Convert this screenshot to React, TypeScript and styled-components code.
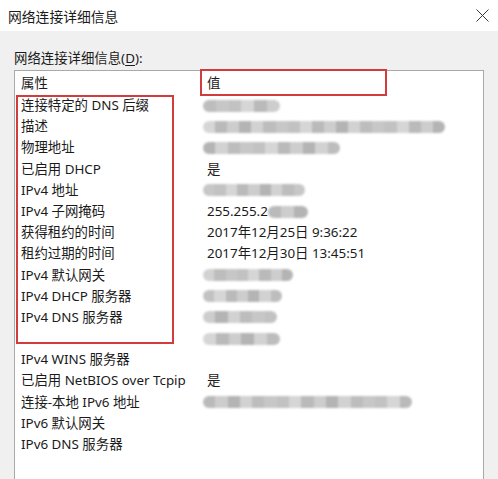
import React from "react";
import styled, { createGlobalStyle } from "styled-components";

const Global = createGlobalStyle`
  html, body { margin: 0; padding: 0; background: #f0f0f0; }
  body { font-family: "Noto Sans", "Noto Sans CJK SC", sans-serif; }
`;

const Window = styled.div`
  width: 498px;
  height: 479px;
  overflow: hidden;
  display: flex;
  flex-direction: column;
  background: #f0f0f0;
  color: #1b1b1b;
  font-family: "Noto Sans", "Noto Sans CJK SC", sans-serif;
  font-size: 13.4px;
`;

const TitleBar = styled.div`
  height: 31px;
  flex: 0 0 31px;
  background: #ffffff;
  display: flex;
  align-items: center;
  justify-content: space-between;
  padding: 0 9px 0 8px;
  font-size: 13.8px;
  color: #1a1a1a;
`;

const CloseButton = styled.div`
  width: 14px;
  height: 14px;
  display: flex;
  align-items: center;
  justify-content: center;
`;

const Body = styled.div`
  flex: 1;
  display: flex;
  flex-direction: column;
  padding: 17px 14px 0 14px;
`;

const GroupLabel = styled.div`
  line-height: 20px;
  height: 20px;
  margin-bottom: 2px;
  color: #1b1b1b;
`;

const Underline = styled.span`
  text-decoration: underline;
  text-underline-offset: 2px;
`;

const ListBox = styled.div`
  position: relative;
  flex: 1;
  min-height: 420px;
  background: #ffffff;
  border: 1px solid #a9a9a9;
  padding: 0 0 0 6px;
`;

const Grid = styled.div`
  display: grid;
  grid-template-columns: 186px 1fr;
`;

const HeaderCell = styled.div`
  height: 24px;
  line-height: 24px;
  white-space: nowrap;
`;

const Cell = styled.div`
  height: 21.2px;
  line-height: 21.2px;
  white-space: nowrap;
  display: flex;
  align-items: center;
`;

const Mosaic = styled.div<{ $w: number; $offset?: number }>`
  width: ${(p) => p.$w}px;
  margin-left: ${(p) => p.$offset ?? -4}px;
  height: 12px;
  border-radius: 6px;
  display: flex;
  overflow: hidden;
  filter: blur(0.8px);
`;

const Tile = styled.div<{ $shade: string }>`
  flex: 1;
  background: ${(p) => p.$shade};
`;

const Annotation = styled.div<{ $l: number; $t: number; $w: number; $h: number }>`
  position: absolute;
  left: ${(p) => p.$l}px;
  top: ${(p) => p.$t}px;
  width: ${(p) => p.$w}px;
  height: ${(p) => p.$h}px;
  border: 2px solid #d23c3c;
  box-sizing: border-box;
  pointer-events: none;
`;

const shades = ["#cdcdcd", "#bdbdbd", "#d6d6d6", "#b4b4b4", "#c7c7c7", "#bababa", "#d2d2d2", "#c2c2c2"];

const Blur = ({ w, seed = 0, offset }: { w: number; seed?: number; offset?: number }) => {
  const n = Math.max(3, Math.round(w / 12));
  return (
    <Mosaic $w={w} $offset={offset}>
      {Array.from({ length: n }).map((_, i) => (
        <Tile key={i} $shade={shades[(i * 3 + seed) % shades.length]} />
      ))}
    </Mosaic>
  );
};

type Row = { name: string; value?: React.ReactNode };

const rows: Row[] = [
  { name: "连接特定的 DNS 后缀", value: <Blur w={77} seed={1} /> },
  { name: "描述", value: <Blur w={242} seed={2} /> },
  { name: "物理地址", value: <Blur w={137} seed={3} /> },
  { name: "已启用 DHCP", value: "是" },
  { name: "IPv4 地址", value: <Blur w={102} seed={4} /> },
  {
    name: "IPv4 子网掩码",
    value: (
      <>
        255.255.2
        <Blur w={40} seed={5} offset={0} />
      </>
    ),
  },
  { name: "获得租约的时间", value: "2017年12月25日 9:36:22" },
  { name: "租约过期的时间", value: "2017年12月30日 13:45:51" },
  { name: "IPv4 默认网关", value: <Blur w={90} seed={6} /> },
  { name: "IPv4 DHCP 服务器", value: <Blur w={79} seed={7} /> },
  { name: "IPv4 DNS 服务器", value: <Blur w={74} seed={0} /> },
  { name: "", value: <Blur w={77} seed={2} /> },
  { name: "IPv4 WINS 服务器" },
  { name: "已启用 NetBIOS over Tcpip", value: "是" },
  { name: "连接-本地 IPv6 地址", value: <Blur w={209} seed={5} /> },
  { name: "IPv6 默认网关" },
  { name: "IPv6 DNS 服务器" },
];

export default function App() {
  return (
    <>
      <Global />
      <Window>
        <TitleBar>
          <span>网络连接详细信息</span>
          <CloseButton>
            <svg width="13" height="13" viewBox="0 0 13 13">
              <path d="M0.5 0.5 L12.5 12.5 M12.5 0.5 L0.5 12.5" stroke="#3a3a3a" strokeWidth="1" fill="none" />
            </svg>
          </CloseButton>
        </TitleBar>
        <Body>
          <GroupLabel>
            网络连接详细信息(<Underline>D</Underline>):
          </GroupLabel>
          <ListBox>
            <Grid>
              <HeaderCell>属性</HeaderCell>
              <HeaderCell>值</HeaderCell>
              {rows.map((r, i) => (
                <React.Fragment key={i}>
                  <Cell>{r.name}</Cell>
                  <Cell>{r.value}</Cell>
                </React.Fragment>
              ))}
            </Grid>
            <Annotation $l={185} $t={-2} $w={187} $h={27} />
            <Annotation $l={1} $t={24} $w={158} $h={249} />
          </ListBox>
        </Body>
      </Window>
    </>
  );
}
